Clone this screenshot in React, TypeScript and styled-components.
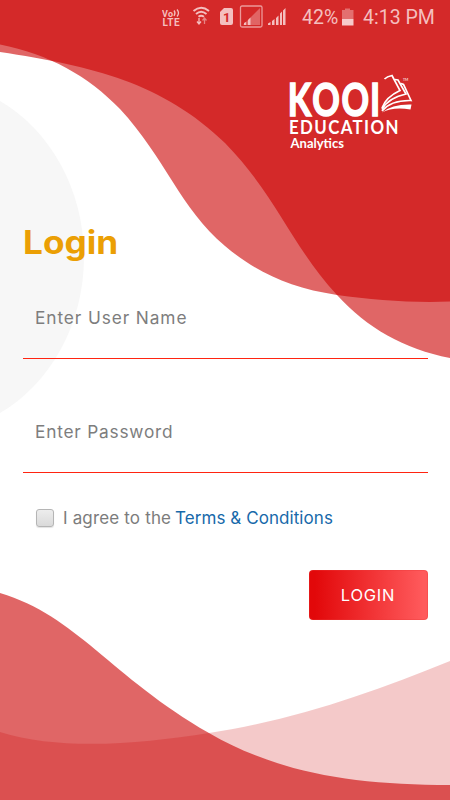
import React from "react";
import styled, { createGlobalStyle } from "styled-components";

const GlobalStyle = createGlobalStyle`
  *, *::before, *::after { box-sizing: border-box; }
  body { margin: 0; background: #fff; }
`;

const Screen = styled.main`
  position: relative;
  width: 450px;
  height: 800px;
  overflow: hidden;
  background: #fff;
  font-family: Inter, "Liberation Sans", sans-serif;
`;

const Backdrop = styled.svg`
  position: absolute;
  inset: 0;
`;

const Content = styled.div`
  position: relative;
  display: flex;
  flex-direction: column;
  height: 100%;
`;

const StatusBar = styled.header`
  display: flex;
  align-items: center;
  height: 36px;
  padding-left: 162px;
  color: #f4bfbf;
  font-family: Roboto, sans-serif;
`;

const StatusText = styled.span<{ $left: number; $width: number }>`
  margin-left: ${(p) => p.$left}px;
  width: ${(p) => p.$width}px;
  font-size: 19.5px;
  line-height: 36px;
  white-space: nowrap;
`;

const LogoRow = styled.div`
  display: flex;
  padding: 29px 0 0 280px;
  height: 124px;
`;

const Form = styled.form`
  display: flex;
  flex-direction: column;
  padding: 63px 22.5px 0;
`;

const Title = styled.h1`
  margin: 0;
  height: 40px;
  font-size: 32px;
  line-height: 40px;
  font-weight: 700;
  color: #eb9f04;
  width: max-content;
  transform: scaleX(1.1);
  transform-origin: left;
`;

const Field = styled.input<{ $top: number; $tracking: number }>`
  margin: ${(p) => p.$top}px 0 0;
  width: 405px;
  height: 82px;
  padding: 0 13px 0 12.5px;
  border: 0;
  border-bottom: 1.5px solid #ff2411;
  border-radius: 0;
  outline: 0;
  background: transparent;
  font: 400 17.3px Inter, sans-serif;
  letter-spacing: ${(p) => p.$tracking}px;
  &::placeholder { color: #7d7d7d; opacity: 1; }
`;

const Agreement = styled.label`
  display: flex;
  align-items: center;
  height: 24px;
  margin-top: 33px;
  padding-left: 13px;
  font-size: 17px;
  line-height: 24px;
  color: #7c7c7c;
  white-space: pre;
`;

const CheckBox = styled.input`
  appearance: none;
  width: 18px;
  height: 18px;
  margin: 0 9.5px 0 0;
  border: 1px solid #b5b5b5;
  border-radius: 3px;
  background: linear-gradient(#ededed, #dadada);
  box-shadow: 0 1px 1px #e3e3e3;
`;

const AgreeText = styled.span`
  width: 112px;
  letter-spacing: 0.16px;
`;

const TermsLink = styled.a`
  color: #1769aa;
  letter-spacing: 0.07px;
`;

const LoginButton = styled.button`
  align-self: flex-end;
  width: 119px;
  height: 50px;
  margin-top: 40px;
  padding: 0;
  border: 1px solid #e93a3a55;
  border-radius: 4px;
  background: linear-gradient(90deg, #e2080a 5%, #ff5a5c 96%) border-box;
  color: #fff;
  font: 400 16.5px Inter, sans-serif;
  letter-spacing: 0.75px;
`;

const Waves = () => (
  <Backdrop width="450" height="800" viewBox="0 0 450 800" aria-hidden="true">
    <path d="M0 101C50 130 84 190 84 257S50 384 0 413Z" fill="#f7f7f7" />
    <g fill="#cb0000" fillOpacity=".6">
      <path d="M0 0V44.500C49 54 88 76 120 109C166 159 180 208 225 246C256 272 289 288 337 295C373 300 412 303 450 301.500V0Z" />
      <path d="M0 0V52C93 66 163 83 225 143C276 195 293 248 337 295C367 328 404 349 450 358V0Z" />
      <path d="M0 593C77 616 110 676 209 733C278 773 354 785 450 785V800H0Z" />
    </g>
    <path d="M0 732C61 751 139 744 209 733C299 719 373 692 450 661V800H0Z" fill="#cb0000" fillOpacity=".21" />
  </Backdrop>
);

const StatusIcons = () => (
  <svg width="125" height="36" viewBox="162 0 125 36" fill="#f4bfbf" aria-hidden="true">
    <g fontFamily="Roboto, sans-serif" fontWeight="700">
      <text x="162" y="16.500" fontSize="9" textLength="11">Vo</text>
      <text x="162.500" y="26" fontSize="10" textLength="17">LTE</text>
    </g>
    <g fill="none" stroke="#f4bfbf" strokeWidth="1.300">
      <path d="M174 10.500Q176 13 174 16M177 9.500Q180 13 177 16.500" />
      <path strokeWidth="1.900" d="M193.500 11Q201 4.500 209 11M196 14Q201 9.500 206.500 14M198.500 16.800Q201 14.700 204 16.800" />
      <path d="M199 18V24M197 21.500L199 24L201 21.500" />
      <path opacity=".6" d="M204.500 24V18M202.500 20.500L204.500 18L206.500 20.500" />
      <rect x="240.500" y="6" width="21.500" height="21" rx="1.500" opacity=".75" />
    </g>
    <path d="M224 8H231Q233 8 233 10V23Q233 25 231 25H222Q220 25 220 23V12Z" />
    <text x="223" y="21.500" fontFamily="Roboto, sans-serif" fontWeight="700" fontSize="13" fill="#d32929">1</text>
    <path d="M243 25L260 8V25Z" opacity=".4" />
    <path d="M244 25V23L246 22V25ZM248 25V20L250.500 17.500V25Z" />
    <path d="M268 25V23.500L270.500 22V25ZM272 25V21L274.500 19V25ZM276 25V18L278.500 15.500V25ZM280 25V13.500L282 11.500V25ZM283 25V10.500L285.500 8V25Z" />
  </svg>
);

const Battery = () => (
  <svg width="13" height="20" viewBox="0 0 13 20" aria-hidden="true">
    <path d="M1 2H4V.5H9V2H12.500V11H1Z" fill="#e36f6f" />
    <path d="M1 11H12.500V17.500H1Z" fill="#f7caca" />
  </svg>
);

const Logo = () => (
  <svg width="140" height="95" viewBox="280 65 140 95" fill="#fff" role="img" aria-label="Kooi Education Analytics">
    <g fontFamily="Lato, sans-serif" fontWeight="700">
      <text transform="translate(287.800 115.800) scale(.75 1)" x="0 32.500 71.500 109.500" y="0" fontSize="45.500" stroke="#fff" strokeWidth="1.600">KOOI</text>
      <text transform="translate(289 134) scale(.92 1)" fontSize="18.300" textLength="119">EDUCATION</text>
      <text x="290.500" y="148" fontSize="13" textLength="53.500">Analytics</text>
    </g>
    <g fill="none" stroke="#fff" strokeLinejoin="miter">
      <path strokeWidth="1.700" d="M384.500 79Q387 76.500 392 75.500L400 90.500Q386 97 382 108" />
      <path strokeWidth="1.700" d="M395 79.500L398 80L406 94Q388 98 382 109.500" />
      <path strokeWidth="1.700" d="M401 83.500L403.500 84.500L411 100.500Q391 100 382 111" />
    </g>
    <path d="M382 112.500Q392 104 411.500 104.500L410.500 109.500Q393 106.500 382 112.500Z" />
    <text x="403" y="81" fontFamily="Lato, sans-serif" fontSize="3.500">TM</text>
  </svg>
);

export default function App() {
  return (
    <Screen>
      <GlobalStyle />
      <Waves />
      <Content>
        <StatusBar>
          <StatusIcons />
          <StatusText $left={15} $width={39}>42%</StatusText>
          <Battery />
          <StatusText $left={9} $width={75}>4:13 PM</StatusText>
        </StatusBar>
        <LogoRow>
          <Logo />
        </LogoRow>
        <Form onSubmit={(e) => e.preventDefault()}>
          <Title>Login</Title>
          <Field $top={14} $tracking={0.9} placeholder="Enter User Name" />
          <Field $top={32} $tracking={0.78} type="password" placeholder="Enter Password" />
          <Agreement>
            <CheckBox type="checkbox" />
            <AgreeText>I agree to the</AgreeText>
            <TermsLink>Terms &amp; Conditions</TermsLink>
          </Agreement>
          <LoginButton type="submit">LOGIN</LoginButton>
        </Form>
      </Content>
    </Screen>
  );
}
